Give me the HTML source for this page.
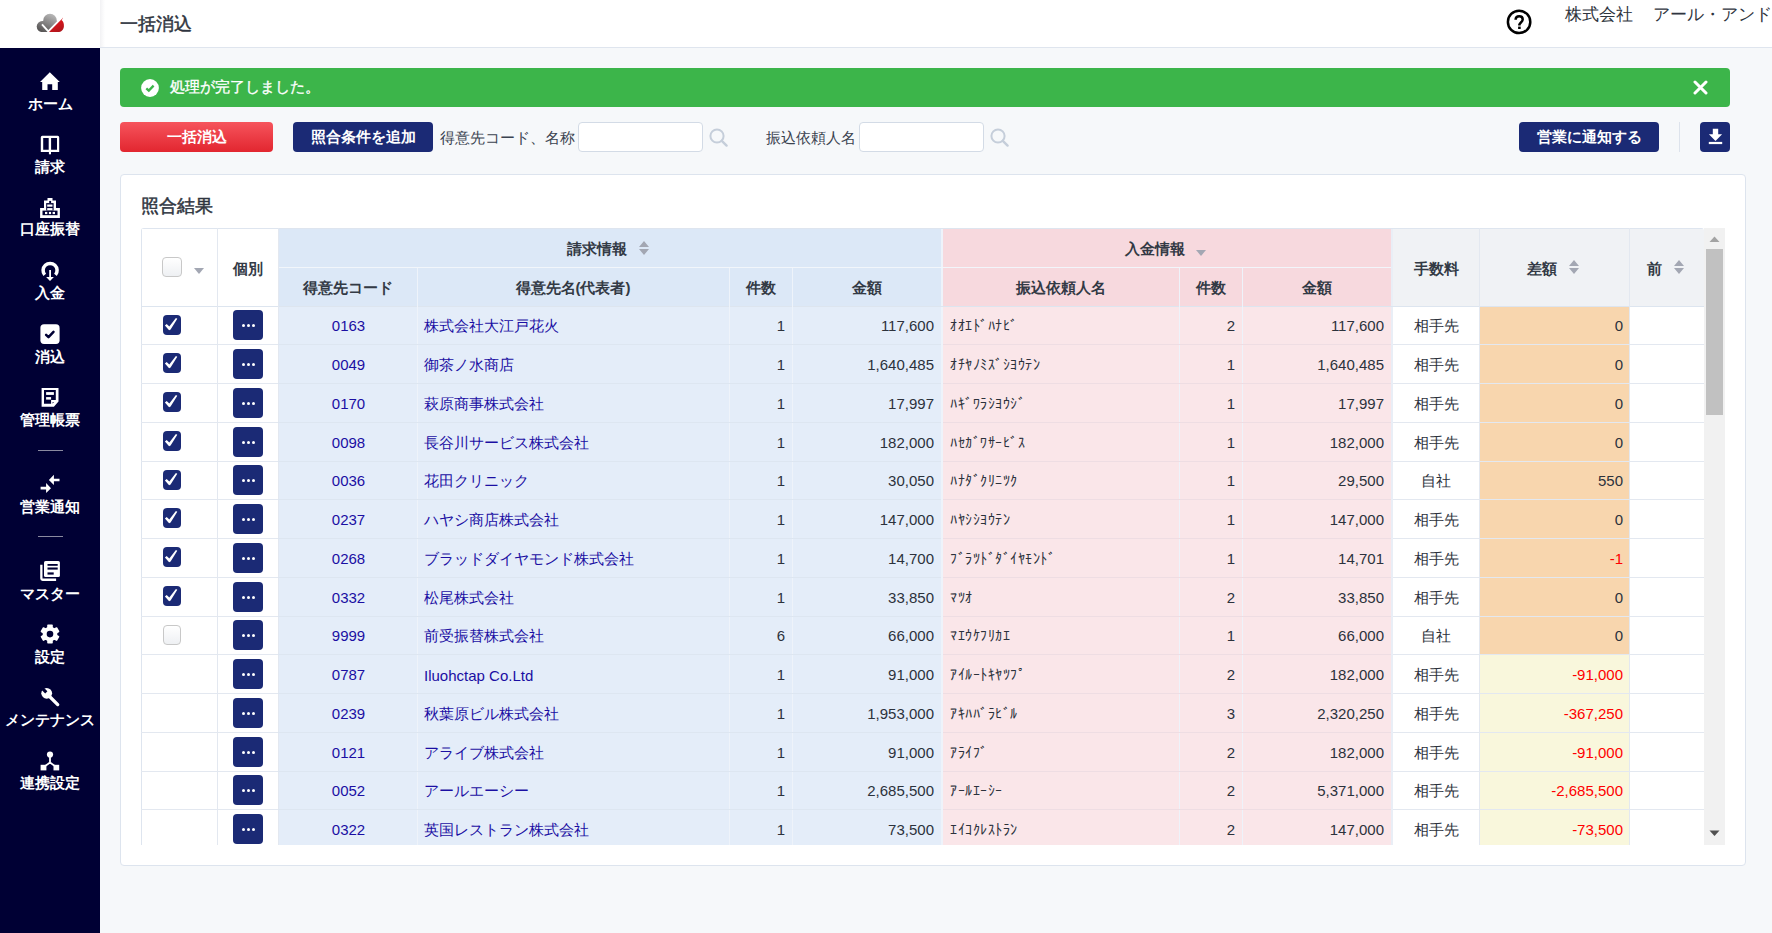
<!DOCTYPE html><html><head><meta charset="utf-8"><title>一括消込</title><style>
*{box-sizing:border-box;margin:0;padding:0}
html,body{width:1772px;height:933px;overflow:hidden;background:#f6f8fa;font-family:"Liberation Sans",sans-serif;color:#333a45}
.abs{position:absolute}
svg{display:block}
#side{position:absolute;left:0;top:48px;width:100px;height:885px;background:#000034}
#logo{position:absolute;left:0;top:0;width:100px;height:48px;background:#fff}
#hdr{position:absolute;left:100px;top:0;width:1672px;height:48px;background:linear-gradient(90deg,#f2f2f4,#fff 5px);border-bottom:1px solid #dfe5ee}
.nav{position:absolute;left:0;width:100px;text-align:center;color:#fff;font-size:15px;font-weight:700;line-height:18px;white-space:nowrap}
.nav svg{position:absolute;left:40px;top:0}
.sep{position:absolute;left:38px;width:25px;height:1px;background:#8a8aa0}
#alert{position:absolute;left:120px;top:68px;width:1610px;height:39px;background:#3cb54a;border-radius:4px}
.btn{position:absolute;height:30px;border-radius:4px;color:#fff;font-size:15px;font-weight:700;text-align:center;line-height:30px;white-space:nowrap}
.navy{background:#1b2a75}
.lbl{position:absolute;font-size:15px;color:#3b4350;line-height:30px;white-space:nowrap}
.inp{position:absolute;height:30px;background:#fff;border:1px solid #d3dbe6;border-radius:4px}
#panel{position:absolute;left:120px;top:174px;width:1626px;height:692px;background:#fff;border:1px solid #dde4ee;border-radius:4px}
#tbl{position:absolute;left:141px;top:228px;width:1563px;height:617px;overflow:hidden;border-top-left-radius:3px;border-top-right-radius:3px}
.c{position:absolute;white-space:nowrap;overflow:hidden;font-size:15px}
.hd{font-weight:700;color:#333a45;display:flex;align-items:center;justify-content:center}
.bd{display:flex;align-items:center;color:#2c323c}
.blue{color:#1b0fa3 !important}
.r{justify-content:flex-end}
.ctr{justify-content:center}
.l{justify-content:flex-start}
.red{color:#ff0000 !important}
.hl{position:absolute;height:1px}
.vl{position:absolute;width:1px}
.cb{position:absolute;width:18px;height:20px;border-radius:4px;background:#1b2a75}
.cbo{position:absolute;width:20px;height:20px;border-radius:4px;background:linear-gradient(#fff,#eef0f3);border:1px solid #c8c8c8}
.dots{position:absolute;width:30px;height:30px;border-radius:4px;background:#1b2a75}
.dots i{position:absolute;top:13.9px;width:3.2px;height:3.2px;border-radius:50%;background:#fff}
#sb{position:absolute;left:1704px;top:228px;width:21px;height:617px;background:#f1f1f1}
</style></head><body><div id="logo"><svg class="abs" style="left:34px;top:10px" width="32" height="24" viewBox="34 10 32 24"><defs><linearGradient id="gg" gradientUnits="userSpaceOnUse" x1="52" y1="14" x2="44" y2="32"><stop offset="0" stop-color="#b8b8b8"/><stop offset="1" stop-color="#595757"/></linearGradient><linearGradient id="rg" gradientUnits="userSpaceOnUse" x1="56" y1="20" x2="62" y2="32"><stop offset="0" stop-color="#e3161d"/><stop offset="1" stop-color="#a9161c"/></linearGradient><clipPath id="cg"><path d="M30 8 H71.5 L47.5 32 H30 Z"/></clipPath></defs><g clip-path="url(#cg)" fill="url(#gg)"><circle cx="42.2" cy="26.6" r="5.5"/><circle cx="50" cy="20.6" r="6.8"/><rect x="42" y="21" width="16" height="11"/></g><path d="M48.3 32 L62.2 17.3 L62.7 18.7 L61.5 20.1 C63.5 21.6 64.1 24 63.9 26.4 C63.6 29.8 61.2 32 58 32 Z" fill="url(#rg)"/><path d="M42 24.3 L48.3 31.3 L62.4 17.1" fill="none" stroke="#fff" stroke-width="1.9"/></svg></div><div id="hdr"></div><div class="abs" style="left:120px;top:12.5px;font-size:17.5px;line-height:22px;color:#2f3540;-webkit-text-stroke:0.45px #2f3540">一括消込</div><svg class="abs" style="left:1506px;top:9px" width="26" height="26" viewBox="0 0 26 26"><circle cx="13.1" cy="12.9" r="11.2" fill="none" stroke="#000" stroke-width="2.5"/><path d="M9.6 10.8 C9.6 8.4 11.2 7.2 13.2 7.2 C15.2 7.2 16.7 8.5 16.7 10.4 C16.7 12.4 14.3 13.6 13.4 15.6 V16.4" fill="none" stroke="#000" stroke-width="2.5"/><rect x="12.1" y="17.6" width="2.6" height="2.4" fill="#000"/></svg><div class="abs" style="left:1565px;top:4px;font-size:17px;line-height:22px;color:#2f3540;white-space:nowrap">株式会社<span style="display:inline-block;width:19.5px"></span>アール・アンド・エー</div><div id="side"></div><svg class="abs" style="left:38px;top:69px" width="24" height="26" viewBox="0 0 24 26"><path d="M11.8 3.3 L21.8 13 H19.8 V20.9 H14.2 V15.2 H9.5 V20.9 H4.2 V13 H2 Z" fill="#fff"/></svg><div class="nav" style="top:95px">ホーム</div><svg class="abs" style="left:38px;top:132px" width="24" height="26" viewBox="0 0 24 26"><path fill-rule="evenodd" d="M4.3 3.8 H19.7 Q21.2 3.8 21.2 5.3 V20.1 H2.8 V5.3 Q2.8 3.8 4.3 3.8 Z M5.2 6 V17.7 H10.7 V6 Z M13.1 6 V17.7 H19 V6 Z" fill="#fff"/><rect x="10.9" y="19.5" width="2.1" height="2.8" fill="#fff"/></svg><div class="nav" style="top:158px">請求</div><svg class="abs" style="left:38px;top:195px" width="24" height="26" viewBox="0 0 24 26"><path d="M9.5 3 H14.5 V5.6 H18 V13 H21.9 V23 H2.1 V13 H6 V5.6 H9.5 Z" fill="#fff"/><rect x="8.2" y="8.1" width="7.4" height="7.5" fill="#000034"/><rect x="4.5" y="15.6" width="15" height="4.6" fill="#000034"/><path d="M11.2 5.9 H13.1 L13.1 8.2 H11.2 Z" fill="#000034"/><rect x="9.2" y="9.5" width="5.3" height="2.2" fill="#fff"/><rect x="9.2" y="13.1" width="5.3" height="2.1" fill="#fff"/><rect x="7" y="16.9" width="2.3" height="2.2" fill="#fff"/><rect x="10.9" y="16.9" width="2.2" height="2.2" fill="#fff"/><rect x="14.6" y="16.9" width="2.4" height="2.2" fill="#fff"/></svg><div class="nav" style="top:220px">口座振替</div><svg class="abs" style="left:38px;top:258px" width="24" height="26" viewBox="0 0 24 26"><path d="M6.74 16.9 A7 7 0 1 1 17.46 16.9" fill="none" stroke="#fff" stroke-width="3.5"/><rect x="11.2" y="12" width="1.8" height="7.8" fill="#fff"/><path d="M8.1 19 H15.9 L12 23 Z" fill="#fff"/></svg><div class="nav" style="top:284px">入金</div><svg class="abs" style="left:38px;top:321px" width="24" height="26" viewBox="0 0 24 26"><rect x="2.4" y="3.3" width="19.2" height="19.6" rx="3.6" fill="#fff"/><path d="M8.1 13.8 L10.5 16.2 L15.5 10.9" fill="none" stroke="#000034" stroke-width="2.5" stroke-linecap="round" stroke-linejoin="round"/></svg><div class="nav" style="top:348px">消込</div><svg class="abs" style="left:38px;top:384px" width="24" height="26" viewBox="0 0 24 26"><path fill-rule="evenodd" d="M3.6 3.9 H20.5 V17.4 L15.9 22.7 H3.6 Z M6 6 V19.8 H13.1 V15.9 H17.8 V6 Z" fill="#fff"/><rect x="8.1" y="8.1" width="7.8" height="2.8" fill="#fff"/><rect x="8.1" y="13.1" width="5" height="2.5" fill="#fff"/><path d="M14.5 18.2 H16.2 L14.5 19.6 Z" fill="#000034"/></svg><div class="nav" style="top:411px">管理帳票</div><svg class="abs" style="left:38px;top:472px" width="24" height="26" viewBox="0 0 24 26"><path d="M10.9 8.1 L15.9 2.8 V6.8 H21.5 V9.3 H15.9 V13 Z" fill="#fff"/><path d="M13 16.2 L8.1 11 V14.8 H2.6 V17.6 H8.1 V21 Z" fill="#fff"/></svg><div class="nav" style="top:498px">営業通知</div><svg class="abs" style="left:38px;top:558px" width="24" height="26" viewBox="0 0 24 26"><rect x="6" y="2.9" width="15.9" height="16.1" rx="1.6" fill="#fff"/><rect x="9.5" y="6" width="10.2" height="1.8" fill="#000034"/><rect x="9.5" y="9.5" width="10.2" height="2.1" fill="#000034"/><rect x="9.5" y="14.4" width="6.2" height="2.2" fill="#000034"/><path d="M3.35 6.8 V20.5 Q3.35 21.75 4.6 21.75 H18.1" fill="none" stroke="#fff" stroke-width="2.3"/></svg><div class="nav" style="top:585px">マスター</div><svg class="abs" style="left:38px;top:621px" width="24" height="26" viewBox="0 0 24 26"><g transform="translate(12 13.1)"><circle r="7.4" fill="#fff"/><rect x="-2.8" y="-9.5" width="5.6" height="19" rx="0.8" fill="#fff"/><rect x="-2.8" y="-9.5" width="5.6" height="19" rx="0.8" fill="#fff" transform="rotate(60)"/><rect x="-2.8" y="-9.5" width="5.6" height="19" rx="0.8" fill="#fff" transform="rotate(120)"/><circle r="3.3" fill="#000034"/></g></svg><div class="nav" style="top:648px">設定</div><svg class="abs" style="left:38px;top:684px" width="24" height="26" viewBox="0 0 24 26"><path d="M10.6 11.5 L19.7 20.6" stroke="#fff" stroke-width="3.3" stroke-linecap="round"/><circle cx="8.7" cy="9.3" r="5.4" fill="#fff"/><path d="M4.4 2.2 L9.4 7.2 L7.2 9.4 L2.2 4.4 Z" fill="#000034"/></svg><div class="nav" style="top:711px">メンテナンス</div><svg class="abs" style="left:38px;top:747px" width="24" height="26" viewBox="0 0 24 26"><circle cx="12" cy="7.5" r="3.1" fill="#fff"/><path d="M12 8 V15.6 L6.8 19.2 M12 15.6 L17.2 19.2" fill="none" stroke="#fff" stroke-width="1.8"/><rect x="2.6" y="17.8" width="5.8" height="5.6" fill="#fff"/><rect x="15.5" y="17.8" width="5.7" height="5.6" fill="#fff"/></svg><div class="nav" style="top:774px">連携設定</div><div class="sep" style="top:450px"></div><div class="sep" style="top:536px"></div><div id="alert"></div><svg class="abs" style="left:141px;top:79px" width="18" height="18" viewBox="0 0 18 18"><circle cx="9" cy="9" r="8.9" fill="#fff"/><path d="M5.3 9.3 L7.8 11.6 L12.6 6.6" fill="none" stroke="#3cb54a" stroke-width="2.3"/></svg><div class="abs" style="left:170px;top:77px;font-size:15px;line-height:20px;color:#fff;white-space:nowrap;-webkit-text-stroke:0.35px #fff">処理が完了しました。</div><svg class="abs" style="left:1693px;top:80px" width="15" height="15" viewBox="0 0 15 15"><path d="M2 2 L13 13 M13 2 L2 13" stroke="#fff" stroke-width="3" stroke-linecap="round"/></svg><div class="btn" style="left:120px;top:122px;width:153px;background:linear-gradient(#f6545c,#e2262f)">一括消込</div><div class="btn navy" style="left:293px;top:122px;width:140px">照合条件を追加</div><div class="lbl" style="left:440px;top:123px">得意先コード、名称</div><div class="inp" style="left:578px;top:122px;width:125px"></div><div class="abs" style="left:709px;top:128px"><svg width="20" height="20" viewBox="0 0 20 20"><circle cx="8" cy="8" r="6.6" fill="none" stroke="#c5ceda" stroke-width="2"/><path d="M12.8 12.8 L17.6 17.6" stroke="#c5ceda" stroke-width="2.4" stroke-linecap="round"/></svg></div><div class="lbl" style="left:766px;top:123px">振込依頼人名</div><div class="inp" style="left:859px;top:122px;width:125px"></div><div class="abs" style="left:990px;top:128px"><svg width="20" height="20" viewBox="0 0 20 20"><circle cx="8" cy="8" r="6.6" fill="none" stroke="#c5ceda" stroke-width="2"/><path d="M12.8 12.8 L17.6 17.6" stroke="#c5ceda" stroke-width="2.4" stroke-linecap="round"/></svg></div><div class="btn navy" style="left:1519px;top:122px;width:140px">営業に通知する</div><div class="abs" style="left:1679px;top:122px;width:1px;height:30px;background:#dde3ec"></div><div class="btn navy" style="left:1700px;top:122px;width:30px"><svg class="abs" style="left:0;top:0" width="30" height="30" viewBox="0 0 30 30"><path d="M12.8 6.7 H18.2 V12.3 H22.1 L15.5 19.1 L8.9 12.3 H12.8 Z" fill="#fff"/><rect x="8.8" y="19.9" width="13.4" height="2.2" fill="#fff"/></svg></div><div id="panel"></div><div class="abs" style="left:141px;top:194.5px;font-size:17.5px;line-height:22px;color:#2f3540;-webkit-text-stroke:0.5px #2f3540">照合結果</div><div id="tbl"><div class="abs" style="left:0px;top:0px;width:137px;height:78px;background:#fff;"></div><div class="abs" style="left:137px;top:0px;width:663px;height:78px;background:#dce8f7;"></div><div class="abs" style="left:802px;top:0px;width:448px;height:78px;background:#f7d9de;"></div><div class="abs" style="left:1252px;top:0px;width:311px;height:78px;background:#f0f2f5;"></div><div class="abs" style="left:0px;top:78px;width:137px;height:539px;background:#fff;"></div><div class="abs" style="left:137px;top:78px;width:663px;height:539px;background:#e4edf9;"></div><div class="abs" style="left:802px;top:78px;width:448px;height:539px;background:#fae6e9;"></div><div class="abs" style="left:1252px;top:78px;width:86px;height:539px;background:#fff;"></div><div class="abs" style="left:1488px;top:78px;width:75px;height:539px;background:#fff;"></div><div class="abs" style="left:1339px;top:78px;width:149px;height:38px;background:#f8d6ae;"></div><div class="abs" style="left:1339px;top:116px;width:149px;height:39px;background:#f8d6ae;"></div><div class="abs" style="left:1339px;top:155px;width:149px;height:39px;background:#f8d6ae;"></div><div class="abs" style="left:1339px;top:194px;width:149px;height:39px;background:#f8d6ae;"></div><div class="abs" style="left:1339px;top:233px;width:149px;height:38px;background:#f8d6ae;"></div><div class="abs" style="left:1339px;top:271px;width:149px;height:39px;background:#f8d6ae;"></div><div class="abs" style="left:1339px;top:310px;width:149px;height:39px;background:#f8d6ae;"></div><div class="abs" style="left:1339px;top:349px;width:149px;height:39px;background:#f8d6ae;"></div><div class="abs" style="left:1339px;top:388px;width:149px;height:38px;background:#f8d6ae;"></div><div class="abs" style="left:1339px;top:426px;width:149px;height:39px;background:#f9f7dc;"></div><div class="abs" style="left:1339px;top:465px;width:149px;height:39px;background:#f9f7dc;"></div><div class="abs" style="left:1339px;top:504px;width:149px;height:39px;background:#f9f7dc;"></div><div class="abs" style="left:1339px;top:543px;width:149px;height:38px;background:#f9f7dc;"></div><div class="abs" style="left:1339px;top:581px;width:149px;height:36px;background:#f9f7dc;"></div><div class="abs" style="left:800px;top:0px;width:2px;height:617px;background:#eef3fa;"></div><div class="abs" style="left:1250px;top:0px;width:2px;height:617px;background:#e9eef6;"></div><div class="abs" style="left:137px;top:39px;width:1113px;height:1px;background:#f2f6fb;"></div><div class="abs" style="left:0px;top:78px;width:1563px;height:1px;background:#dde5ef;"></div><div class="abs" style="left:0px;top:0px;width:1px;height:617px;background:#dee5ef;"></div><div class="abs" style="left:0px;top:0px;width:1563px;height:1px;background:#dee5ef;"></div><div class="abs" style="left:76px;top:0px;width:1px;height:617px;background:#e3e8f0;"></div><div class="abs" style="left:137px;top:0px;width:1px;height:617px;background:#e3e8f0;"></div><div class="abs" style="left:276px;top:40px;width:1px;height:577px;background:#eef3fa;"></div><div class="abs" style="left:588px;top:40px;width:1px;height:577px;background:#eef3fa;"></div><div class="abs" style="left:651px;top:40px;width:1px;height:577px;background:#eef3fa;"></div><div class="abs" style="left:1038px;top:40px;width:1px;height:577px;background:#eef3fa;"></div><div class="abs" style="left:1101px;top:40px;width:1px;height:577px;background:#eef3fa;"></div><div class="abs" style="left:1338px;top:0px;width:1px;height:617px;background:#e3e8f0;"></div><div class="abs" style="left:1488px;top:0px;width:1px;height:617px;background:#e3e8f0;"></div><div class="abs" style="left:0px;top:116px;width:137px;height:1px;background:#e3e8f0;"></div><div class="abs" style="left:137px;top:116px;width:663px;height:1px;background:#dde6f1;"></div><div class="abs" style="left:802px;top:116px;width:448px;height:1px;background:#eedde3;"></div><div class="abs" style="left:1252px;top:116px;width:311px;height:1px;background:#e3e8f0;"></div><div class="abs" style="left:0px;top:155px;width:137px;height:1px;background:#e3e8f0;"></div><div class="abs" style="left:137px;top:155px;width:663px;height:1px;background:#dde6f1;"></div><div class="abs" style="left:802px;top:155px;width:448px;height:1px;background:#eedde3;"></div><div class="abs" style="left:1252px;top:155px;width:311px;height:1px;background:#e3e8f0;"></div><div class="abs" style="left:0px;top:194px;width:137px;height:1px;background:#e3e8f0;"></div><div class="abs" style="left:137px;top:194px;width:663px;height:1px;background:#dde6f1;"></div><div class="abs" style="left:802px;top:194px;width:448px;height:1px;background:#eedde3;"></div><div class="abs" style="left:1252px;top:194px;width:311px;height:1px;background:#e3e8f0;"></div><div class="abs" style="left:0px;top:233px;width:137px;height:1px;background:#e3e8f0;"></div><div class="abs" style="left:137px;top:233px;width:663px;height:1px;background:#dde6f1;"></div><div class="abs" style="left:802px;top:233px;width:448px;height:1px;background:#eedde3;"></div><div class="abs" style="left:1252px;top:233px;width:311px;height:1px;background:#e3e8f0;"></div><div class="abs" style="left:0px;top:271px;width:137px;height:1px;background:#e3e8f0;"></div><div class="abs" style="left:137px;top:271px;width:663px;height:1px;background:#dde6f1;"></div><div class="abs" style="left:802px;top:271px;width:448px;height:1px;background:#eedde3;"></div><div class="abs" style="left:1252px;top:271px;width:311px;height:1px;background:#e3e8f0;"></div><div class="abs" style="left:0px;top:310px;width:137px;height:1px;background:#e3e8f0;"></div><div class="abs" style="left:137px;top:310px;width:663px;height:1px;background:#dde6f1;"></div><div class="abs" style="left:802px;top:310px;width:448px;height:1px;background:#eedde3;"></div><div class="abs" style="left:1252px;top:310px;width:311px;height:1px;background:#e3e8f0;"></div><div class="abs" style="left:0px;top:349px;width:137px;height:1px;background:#e3e8f0;"></div><div class="abs" style="left:137px;top:349px;width:663px;height:1px;background:#dde6f1;"></div><div class="abs" style="left:802px;top:349px;width:448px;height:1px;background:#eedde3;"></div><div class="abs" style="left:1252px;top:349px;width:311px;height:1px;background:#e3e8f0;"></div><div class="abs" style="left:0px;top:388px;width:137px;height:1px;background:#e3e8f0;"></div><div class="abs" style="left:137px;top:388px;width:663px;height:1px;background:#dde6f1;"></div><div class="abs" style="left:802px;top:388px;width:448px;height:1px;background:#eedde3;"></div><div class="abs" style="left:1252px;top:388px;width:311px;height:1px;background:#e3e8f0;"></div><div class="abs" style="left:0px;top:426px;width:137px;height:1px;background:#e3e8f0;"></div><div class="abs" style="left:137px;top:426px;width:663px;height:1px;background:#dde6f1;"></div><div class="abs" style="left:802px;top:426px;width:448px;height:1px;background:#eedde3;"></div><div class="abs" style="left:1252px;top:426px;width:311px;height:1px;background:#e3e8f0;"></div><div class="abs" style="left:0px;top:465px;width:137px;height:1px;background:#e3e8f0;"></div><div class="abs" style="left:137px;top:465px;width:663px;height:1px;background:#dde6f1;"></div><div class="abs" style="left:802px;top:465px;width:448px;height:1px;background:#eedde3;"></div><div class="abs" style="left:1252px;top:465px;width:311px;height:1px;background:#e3e8f0;"></div><div class="abs" style="left:0px;top:504px;width:137px;height:1px;background:#e3e8f0;"></div><div class="abs" style="left:137px;top:504px;width:663px;height:1px;background:#dde6f1;"></div><div class="abs" style="left:802px;top:504px;width:448px;height:1px;background:#eedde3;"></div><div class="abs" style="left:1252px;top:504px;width:311px;height:1px;background:#e3e8f0;"></div><div class="abs" style="left:0px;top:543px;width:137px;height:1px;background:#e3e8f0;"></div><div class="abs" style="left:137px;top:543px;width:663px;height:1px;background:#dde6f1;"></div><div class="abs" style="left:802px;top:543px;width:448px;height:1px;background:#eedde3;"></div><div class="abs" style="left:1252px;top:543px;width:311px;height:1px;background:#e3e8f0;"></div><div class="abs" style="left:0px;top:581px;width:137px;height:1px;background:#e3e8f0;"></div><div class="abs" style="left:137px;top:581px;width:663px;height:1px;background:#dde6f1;"></div><div class="abs" style="left:802px;top:581px;width:448px;height:1px;background:#eedde3;"></div><div class="abs" style="left:1252px;top:581px;width:311px;height:1px;background:#e3e8f0;"></div><div class="c hd" style="left:76px;top:2px;width:61px;height:77px;line-height:77px;padding-right:0px">個別</div><div class="c hd" style="left:137px;top:2px;width:663px;height:38px;line-height:38px;padding-right:3px">請求情報<svg style="margin-left:12px;position:relative;top:-1px" width="10" height="14" viewBox="0 0 10 14"><path d="M5 0 L10 6 H0 Z M0 8 H10 L5 14 Z" fill="#a3a7b3"/></svg></div><div class="c hd" style="left:802px;top:2px;width:448px;height:38px;line-height:38px;padding-right:0px">入金情報<span style="margin-left:11px;margin-right:3px;display:inline-flex;margin-top:8px"><svg width="10" height="6" viewBox="0 0 10 6"><path d="M0 0 H10 L5 6 Z" fill="#a3a7b3"/></svg></span></div><div class="c hd" style="left:137px;top:41px;width:139px;height:38px;line-height:38px;padding-right:0px">得意先コード</div><div class="c hd" style="left:276px;top:41px;width:312px;height:38px;line-height:38px;padding-right:0px">得意先名(代表者)</div><div class="c hd" style="left:588px;top:41px;width:63px;height:38px;line-height:38px;padding-right:0px">件数</div><div class="c hd" style="left:651px;top:41px;width:149px;height:38px;line-height:38px;padding-right:0px">金額</div><div class="c hd" style="left:802px;top:41px;width:236px;height:38px;line-height:38px;padding-right:0px">振込依頼人名</div><div class="c hd" style="left:1038px;top:41px;width:63px;height:38px;line-height:38px;padding-right:0px">件数</div><div class="c hd" style="left:1101px;top:41px;width:149px;height:38px;line-height:38px;padding-right:0px">金額</div><div class="c hd" style="left:1252px;top:2px;width:86px;height:77px;line-height:77px;padding-right:0px">手数料</div><div class="c hd" style="left:1339px;top:2px;width:149px;height:77px;line-height:77px;padding-right:4px">差額<svg style="margin-left:12px;position:relative;top:-2px" width="10" height="14" viewBox="0 0 10 14"><path d="M5 0 L10 6 H0 Z M0 8 H10 L5 14 Z" fill="#a3a7b3"/></svg></div><div class="c hd" style="left:1489px;top:2px;width:74px;height:77px;line-height:77px;padding-right:4px">前<svg style="margin-left:12px;position:relative;top:-2px" width="10" height="14" viewBox="0 0 10 14"><path d="M5 0 L10 6 H0 Z M0 8 H10 L5 14 Z" fill="#a3a7b3"/></svg></div><div class="cbo" style="left:21px;top:29px"></div><div class="abs" style="left:53px;top:40px"><svg width="10" height="6" viewBox="0 0 10 6"><path d="M0 0 H10 L5 6 Z" fill="#a3a7b3"/></svg></div><div class="cb" style="left:22px;top:87px"><svg class="abs" style="left:0;top:0" width="18" height="20" viewBox="0 0 18 20"><path d="M1.9 10.6 L3.7 8.9 L6.3 11.5 L12.9 2.9 L14.3 3.7 L7.6 14.4 L6.1 15.3 Z" fill="#fff"/></svg></div><div class="dots" style="left:92px;top:82px"><i style="left:9px"></i><i style="left:13.8px"></i><i style="left:18.8px"></i></div><div class="c bd ctr blue" style="left:137px;top:79px;width:139px;height:37px;padding-left:2px">0163</div><div class="c bd l blue" style="left:276px;top:80px;width:312px;height:37px;padding-left:7px">株式会社大江戸花火</div><div class="c bd r" style="left:588px;top:79px;width:63px;height:37px;padding-right:7px">1</div><div class="c bd r" style="left:651px;top:79px;width:149px;height:37px;padding-right:7px">117,600</div><div class="c bd l" style="left:802px;top:79px;width:236px;height:37px;padding-left:7px"><span style="display:inline-block;transform:scaleX(0.94);transform-origin:0 50%">ｵｵｴﾄﾞﾊﾅﾋﾞ</span></div><div class="c bd r" style="left:1038px;top:79px;width:63px;height:37px;padding-right:7px">2</div><div class="c bd r" style="left:1101px;top:79px;width:149px;height:37px;padding-right:7px">117,600</div><div class="c bd ctr" style="left:1252px;top:80px;width:86px;height:37px;">相手先</div><div class="c bd r" style="left:1339px;top:79px;width:149px;height:37px;padding-right:6px">0</div><div class="cb" style="left:22px;top:125px"><svg class="abs" style="left:0;top:0" width="18" height="20" viewBox="0 0 18 20"><path d="M1.9 10.6 L3.7 8.9 L6.3 11.5 L12.9 2.9 L14.3 3.7 L7.6 14.4 L6.1 15.3 Z" fill="#fff"/></svg></div><div class="dots" style="left:92px;top:121px"><i style="left:9px"></i><i style="left:13.8px"></i><i style="left:18.8px"></i></div><div class="c bd ctr blue" style="left:137px;top:117px;width:139px;height:38px;padding-left:2px">0049</div><div class="c bd l blue" style="left:276px;top:118px;width:312px;height:38px;padding-left:7px">御茶ノ水商店</div><div class="c bd r" style="left:588px;top:117px;width:63px;height:38px;padding-right:7px">1</div><div class="c bd r" style="left:651px;top:117px;width:149px;height:38px;padding-right:7px">1,640,485</div><div class="c bd l" style="left:802px;top:117px;width:236px;height:38px;padding-left:7px"><span style="display:inline-block;transform:scaleX(0.94);transform-origin:0 50%">ｵﾁﾔﾉﾐｽﾞｼﾖｳﾃﾝ</span></div><div class="c bd r" style="left:1038px;top:117px;width:63px;height:38px;padding-right:7px">1</div><div class="c bd r" style="left:1101px;top:117px;width:149px;height:38px;padding-right:7px">1,640,485</div><div class="c bd ctr" style="left:1252px;top:118px;width:86px;height:38px;">相手先</div><div class="c bd r" style="left:1339px;top:117px;width:149px;height:38px;padding-right:6px">0</div><div class="cb" style="left:22px;top:164px"><svg class="abs" style="left:0;top:0" width="18" height="20" viewBox="0 0 18 20"><path d="M1.9 10.6 L3.7 8.9 L6.3 11.5 L12.9 2.9 L14.3 3.7 L7.6 14.4 L6.1 15.3 Z" fill="#fff"/></svg></div><div class="dots" style="left:92px;top:160px"><i style="left:9px"></i><i style="left:13.8px"></i><i style="left:18.8px"></i></div><div class="c bd ctr blue" style="left:137px;top:156px;width:139px;height:38px;padding-left:2px">0170</div><div class="c bd l blue" style="left:276px;top:157px;width:312px;height:38px;padding-left:7px">萩原商事株式会社</div><div class="c bd r" style="left:588px;top:156px;width:63px;height:38px;padding-right:7px">1</div><div class="c bd r" style="left:651px;top:156px;width:149px;height:38px;padding-right:7px">17,997</div><div class="c bd l" style="left:802px;top:156px;width:236px;height:38px;padding-left:7px"><span style="display:inline-block;transform:scaleX(0.94);transform-origin:0 50%">ﾊｷﾞﾜﾗｼﾖｳｼﾞ</span></div><div class="c bd r" style="left:1038px;top:156px;width:63px;height:38px;padding-right:7px">1</div><div class="c bd r" style="left:1101px;top:156px;width:149px;height:38px;padding-right:7px">17,997</div><div class="c bd ctr" style="left:1252px;top:157px;width:86px;height:38px;">相手先</div><div class="c bd r" style="left:1339px;top:156px;width:149px;height:38px;padding-right:6px">0</div><div class="cb" style="left:22px;top:203px"><svg class="abs" style="left:0;top:0" width="18" height="20" viewBox="0 0 18 20"><path d="M1.9 10.6 L3.7 8.9 L6.3 11.5 L12.9 2.9 L14.3 3.7 L7.6 14.4 L6.1 15.3 Z" fill="#fff"/></svg></div><div class="dots" style="left:92px;top:199px"><i style="left:9px"></i><i style="left:13.8px"></i><i style="left:18.8px"></i></div><div class="c bd ctr blue" style="left:137px;top:195px;width:139px;height:38px;padding-left:2px">0098</div><div class="c bd l blue" style="left:276px;top:196px;width:312px;height:38px;padding-left:7px">長谷川サービス株式会社</div><div class="c bd r" style="left:588px;top:195px;width:63px;height:38px;padding-right:7px">1</div><div class="c bd r" style="left:651px;top:195px;width:149px;height:38px;padding-right:7px">182,000</div><div class="c bd l" style="left:802px;top:195px;width:236px;height:38px;padding-left:7px"><span style="display:inline-block;transform:scaleX(0.94);transform-origin:0 50%">ﾊｾｶﾞﾜｻｰﾋﾞｽ</span></div><div class="c bd r" style="left:1038px;top:195px;width:63px;height:38px;padding-right:7px">1</div><div class="c bd r" style="left:1101px;top:195px;width:149px;height:38px;padding-right:7px">182,000</div><div class="c bd ctr" style="left:1252px;top:196px;width:86px;height:38px;">相手先</div><div class="c bd r" style="left:1339px;top:195px;width:149px;height:38px;padding-right:6px">0</div><div class="cb" style="left:22px;top:242px"><svg class="abs" style="left:0;top:0" width="18" height="20" viewBox="0 0 18 20"><path d="M1.9 10.6 L3.7 8.9 L6.3 11.5 L12.9 2.9 L14.3 3.7 L7.6 14.4 L6.1 15.3 Z" fill="#fff"/></svg></div><div class="dots" style="left:92px;top:237px"><i style="left:9px"></i><i style="left:13.8px"></i><i style="left:18.8px"></i></div><div class="c bd ctr blue" style="left:137px;top:234px;width:139px;height:37px;padding-left:2px">0036</div><div class="c bd l blue" style="left:276px;top:235px;width:312px;height:37px;padding-left:7px">花田クリニック</div><div class="c bd r" style="left:588px;top:234px;width:63px;height:37px;padding-right:7px">1</div><div class="c bd r" style="left:651px;top:234px;width:149px;height:37px;padding-right:7px">30,050</div><div class="c bd l" style="left:802px;top:234px;width:236px;height:37px;padding-left:7px"><span style="display:inline-block;transform:scaleX(0.94);transform-origin:0 50%">ﾊﾅﾀﾞｸﾘﾆﾂｸ</span></div><div class="c bd r" style="left:1038px;top:234px;width:63px;height:37px;padding-right:7px">1</div><div class="c bd r" style="left:1101px;top:234px;width:149px;height:37px;padding-right:7px">29,500</div><div class="c bd ctr" style="left:1252px;top:235px;width:86px;height:37px;">自社</div><div class="c bd r" style="left:1339px;top:234px;width:149px;height:37px;padding-right:6px">550</div><div class="cb" style="left:22px;top:280px"><svg class="abs" style="left:0;top:0" width="18" height="20" viewBox="0 0 18 20"><path d="M1.9 10.6 L3.7 8.9 L6.3 11.5 L12.9 2.9 L14.3 3.7 L7.6 14.4 L6.1 15.3 Z" fill="#fff"/></svg></div><div class="dots" style="left:92px;top:276px"><i style="left:9px"></i><i style="left:13.8px"></i><i style="left:18.8px"></i></div><div class="c bd ctr blue" style="left:137px;top:272px;width:139px;height:38px;padding-left:2px">0237</div><div class="c bd l blue" style="left:276px;top:273px;width:312px;height:38px;padding-left:7px">ハヤシ商店株式会社</div><div class="c bd r" style="left:588px;top:272px;width:63px;height:38px;padding-right:7px">1</div><div class="c bd r" style="left:651px;top:272px;width:149px;height:38px;padding-right:7px">147,000</div><div class="c bd l" style="left:802px;top:272px;width:236px;height:38px;padding-left:7px"><span style="display:inline-block;transform:scaleX(0.94);transform-origin:0 50%">ﾊﾔｼｼﾖｳﾃﾝ</span></div><div class="c bd r" style="left:1038px;top:272px;width:63px;height:38px;padding-right:7px">1</div><div class="c bd r" style="left:1101px;top:272px;width:149px;height:38px;padding-right:7px">147,000</div><div class="c bd ctr" style="left:1252px;top:273px;width:86px;height:38px;">相手先</div><div class="c bd r" style="left:1339px;top:272px;width:149px;height:38px;padding-right:6px">0</div><div class="cb" style="left:22px;top:319px"><svg class="abs" style="left:0;top:0" width="18" height="20" viewBox="0 0 18 20"><path d="M1.9 10.6 L3.7 8.9 L6.3 11.5 L12.9 2.9 L14.3 3.7 L7.6 14.4 L6.1 15.3 Z" fill="#fff"/></svg></div><div class="dots" style="left:92px;top:315px"><i style="left:9px"></i><i style="left:13.8px"></i><i style="left:18.8px"></i></div><div class="c bd ctr blue" style="left:137px;top:311px;width:139px;height:38px;padding-left:2px">0268</div><div class="c bd l blue" style="left:276px;top:312px;width:312px;height:38px;padding-left:7px">ブラッドダイヤモンド株式会社</div><div class="c bd r" style="left:588px;top:311px;width:63px;height:38px;padding-right:7px">1</div><div class="c bd r" style="left:651px;top:311px;width:149px;height:38px;padding-right:7px">14,700</div><div class="c bd l" style="left:802px;top:311px;width:236px;height:38px;padding-left:7px"><span style="display:inline-block;transform:scaleX(0.94);transform-origin:0 50%">ﾌﾞﾗﾂﾄﾞﾀﾞｲﾔﾓﾝﾄﾞ</span></div><div class="c bd r" style="left:1038px;top:311px;width:63px;height:38px;padding-right:7px">1</div><div class="c bd r" style="left:1101px;top:311px;width:149px;height:38px;padding-right:7px">14,701</div><div class="c bd ctr" style="left:1252px;top:312px;width:86px;height:38px;">相手先</div><div class="c bd r red" style="left:1339px;top:311px;width:149px;height:38px;padding-right:6px">-1</div><div class="cb" style="left:22px;top:358px"><svg class="abs" style="left:0;top:0" width="18" height="20" viewBox="0 0 18 20"><path d="M1.9 10.6 L3.7 8.9 L6.3 11.5 L12.9 2.9 L14.3 3.7 L7.6 14.4 L6.1 15.3 Z" fill="#fff"/></svg></div><div class="dots" style="left:92px;top:354px"><i style="left:9px"></i><i style="left:13.8px"></i><i style="left:18.8px"></i></div><div class="c bd ctr blue" style="left:137px;top:350px;width:139px;height:38px;padding-left:2px">0332</div><div class="c bd l blue" style="left:276px;top:351px;width:312px;height:38px;padding-left:7px">松尾株式会社</div><div class="c bd r" style="left:588px;top:350px;width:63px;height:38px;padding-right:7px">1</div><div class="c bd r" style="left:651px;top:350px;width:149px;height:38px;padding-right:7px">33,850</div><div class="c bd l" style="left:802px;top:350px;width:236px;height:38px;padding-left:7px"><span style="display:inline-block;transform:scaleX(0.94);transform-origin:0 50%">ﾏﾂｵ</span></div><div class="c bd r" style="left:1038px;top:350px;width:63px;height:38px;padding-right:7px">2</div><div class="c bd r" style="left:1101px;top:350px;width:149px;height:38px;padding-right:7px">33,850</div><div class="c bd ctr" style="left:1252px;top:351px;width:86px;height:38px;">相手先</div><div class="c bd r" style="left:1339px;top:350px;width:149px;height:38px;padding-right:6px">0</div><div class="cbo" style="left:22px;top:397px;width:18px"></div><div class="dots" style="left:92px;top:392px"><i style="left:9px"></i><i style="left:13.8px"></i><i style="left:18.8px"></i></div><div class="c bd ctr blue" style="left:137px;top:389px;width:139px;height:37px;padding-left:2px">9999</div><div class="c bd l blue" style="left:276px;top:390px;width:312px;height:37px;padding-left:7px">前受振替株式会社</div><div class="c bd r" style="left:588px;top:389px;width:63px;height:37px;padding-right:7px">6</div><div class="c bd r" style="left:651px;top:389px;width:149px;height:37px;padding-right:7px">66,000</div><div class="c bd l" style="left:802px;top:389px;width:236px;height:37px;padding-left:7px"><span style="display:inline-block;transform:scaleX(0.94);transform-origin:0 50%">ﾏｴｳｹﾌﾘｶｴ</span></div><div class="c bd r" style="left:1038px;top:389px;width:63px;height:37px;padding-right:7px">1</div><div class="c bd r" style="left:1101px;top:389px;width:149px;height:37px;padding-right:7px">66,000</div><div class="c bd ctr" style="left:1252px;top:390px;width:86px;height:37px;">自社</div><div class="c bd r" style="left:1339px;top:389px;width:149px;height:37px;padding-right:6px">0</div><div class="dots" style="left:92px;top:431px"><i style="left:9px"></i><i style="left:13.8px"></i><i style="left:18.8px"></i></div><div class="c bd ctr blue" style="left:137px;top:427px;width:139px;height:38px;padding-left:2px">0787</div><div class="c bd l blue" style="left:276px;top:428px;width:312px;height:38px;padding-left:7px">Iluohctap Co.Ltd</div><div class="c bd r" style="left:588px;top:427px;width:63px;height:38px;padding-right:7px">1</div><div class="c bd r" style="left:651px;top:427px;width:149px;height:38px;padding-right:7px">91,000</div><div class="c bd l" style="left:802px;top:427px;width:236px;height:38px;padding-left:7px"><span style="display:inline-block;transform:scaleX(0.94);transform-origin:0 50%">ｱｲﾙｰﾄｷﾔﾂﾌﾟ</span></div><div class="c bd r" style="left:1038px;top:427px;width:63px;height:38px;padding-right:7px">2</div><div class="c bd r" style="left:1101px;top:427px;width:149px;height:38px;padding-right:7px">182,000</div><div class="c bd ctr" style="left:1252px;top:428px;width:86px;height:38px;">相手先</div><div class="c bd r red" style="left:1339px;top:427px;width:149px;height:38px;padding-right:6px">-91,000</div><div class="dots" style="left:92px;top:470px"><i style="left:9px"></i><i style="left:13.8px"></i><i style="left:18.8px"></i></div><div class="c bd ctr blue" style="left:137px;top:466px;width:139px;height:38px;padding-left:2px">0239</div><div class="c bd l blue" style="left:276px;top:467px;width:312px;height:38px;padding-left:7px">秋葉原ビル株式会社</div><div class="c bd r" style="left:588px;top:466px;width:63px;height:38px;padding-right:7px">1</div><div class="c bd r" style="left:651px;top:466px;width:149px;height:38px;padding-right:7px">1,953,000</div><div class="c bd l" style="left:802px;top:466px;width:236px;height:38px;padding-left:7px"><span style="display:inline-block;transform:scaleX(0.94);transform-origin:0 50%">ｱｷﾊﾊﾞﾗﾋﾞﾙ</span></div><div class="c bd r" style="left:1038px;top:466px;width:63px;height:38px;padding-right:7px">3</div><div class="c bd r" style="left:1101px;top:466px;width:149px;height:38px;padding-right:7px">2,320,250</div><div class="c bd ctr" style="left:1252px;top:467px;width:86px;height:38px;">相手先</div><div class="c bd r red" style="left:1339px;top:466px;width:149px;height:38px;padding-right:6px">-367,250</div><div class="dots" style="left:92px;top:509px"><i style="left:9px"></i><i style="left:13.8px"></i><i style="left:18.8px"></i></div><div class="c bd ctr blue" style="left:137px;top:505px;width:139px;height:38px;padding-left:2px">0121</div><div class="c bd l blue" style="left:276px;top:506px;width:312px;height:38px;padding-left:7px">アライブ株式会社</div><div class="c bd r" style="left:588px;top:505px;width:63px;height:38px;padding-right:7px">1</div><div class="c bd r" style="left:651px;top:505px;width:149px;height:38px;padding-right:7px">91,000</div><div class="c bd l" style="left:802px;top:505px;width:236px;height:38px;padding-left:7px"><span style="display:inline-block;transform:scaleX(0.94);transform-origin:0 50%">ｱﾗｲﾌﾞ</span></div><div class="c bd r" style="left:1038px;top:505px;width:63px;height:38px;padding-right:7px">2</div><div class="c bd r" style="left:1101px;top:505px;width:149px;height:38px;padding-right:7px">182,000</div><div class="c bd ctr" style="left:1252px;top:506px;width:86px;height:38px;">相手先</div><div class="c bd r red" style="left:1339px;top:505px;width:149px;height:38px;padding-right:6px">-91,000</div><div class="dots" style="left:92px;top:547px"><i style="left:9px"></i><i style="left:13.8px"></i><i style="left:18.8px"></i></div><div class="c bd ctr blue" style="left:137px;top:544px;width:139px;height:37px;padding-left:2px">0052</div><div class="c bd l blue" style="left:276px;top:545px;width:312px;height:37px;padding-left:7px">アールエーシー</div><div class="c bd r" style="left:588px;top:544px;width:63px;height:37px;padding-right:7px">1</div><div class="c bd r" style="left:651px;top:544px;width:149px;height:37px;padding-right:7px">2,685,500</div><div class="c bd l" style="left:802px;top:544px;width:236px;height:37px;padding-left:7px"><span style="display:inline-block;transform:scaleX(0.94);transform-origin:0 50%">ｱｰﾙｴｰｼｰ</span></div><div class="c bd r" style="left:1038px;top:544px;width:63px;height:37px;padding-right:7px">2</div><div class="c bd r" style="left:1101px;top:544px;width:149px;height:37px;padding-right:7px">5,371,000</div><div class="c bd ctr" style="left:1252px;top:545px;width:86px;height:37px;">相手先</div><div class="c bd r red" style="left:1339px;top:544px;width:149px;height:37px;padding-right:6px">-2,685,500</div><div class="dots" style="left:92px;top:586px"><i style="left:9px"></i><i style="left:13.8px"></i><i style="left:18.8px"></i></div><div class="c bd ctr blue" style="left:137px;top:582px;width:139px;height:38px;padding-left:2px">0322</div><div class="c bd l blue" style="left:276px;top:583px;width:312px;height:38px;padding-left:7px">英国レストラン株式会社</div><div class="c bd r" style="left:588px;top:582px;width:63px;height:38px;padding-right:7px">1</div><div class="c bd r" style="left:651px;top:582px;width:149px;height:38px;padding-right:7px">73,500</div><div class="c bd l" style="left:802px;top:582px;width:236px;height:38px;padding-left:7px"><span style="display:inline-block;transform:scaleX(0.94);transform-origin:0 50%">ｴｲｺｸﾚｽﾄﾗﾝ</span></div><div class="c bd r" style="left:1038px;top:582px;width:63px;height:38px;padding-right:7px">2</div><div class="c bd r" style="left:1101px;top:582px;width:149px;height:38px;padding-right:7px">147,000</div><div class="c bd ctr" style="left:1252px;top:583px;width:86px;height:38px;">相手先</div><div class="c bd r red" style="left:1339px;top:582px;width:149px;height:38px;padding-right:6px">-73,500</div></div><div id="sb"></div><svg class="abs" style="left:1709px;top:236px" width="11" height="7" viewBox="0 0 11 7"><path d="M0.5 6 L5.5 0.6 L10.5 6 Z" fill="#a3a3a3"/></svg><div class="abs" style="left:1706px;top:249px;width:17px;height:166px;background:#c1c1c1"></div><svg class="abs" style="left:1709px;top:830px" width="11" height="7" viewBox="0 0 11 7"><path d="M0.5 0.6 L10.5 0.6 L5.5 6 Z" fill="#505050"/></svg></body></html>
